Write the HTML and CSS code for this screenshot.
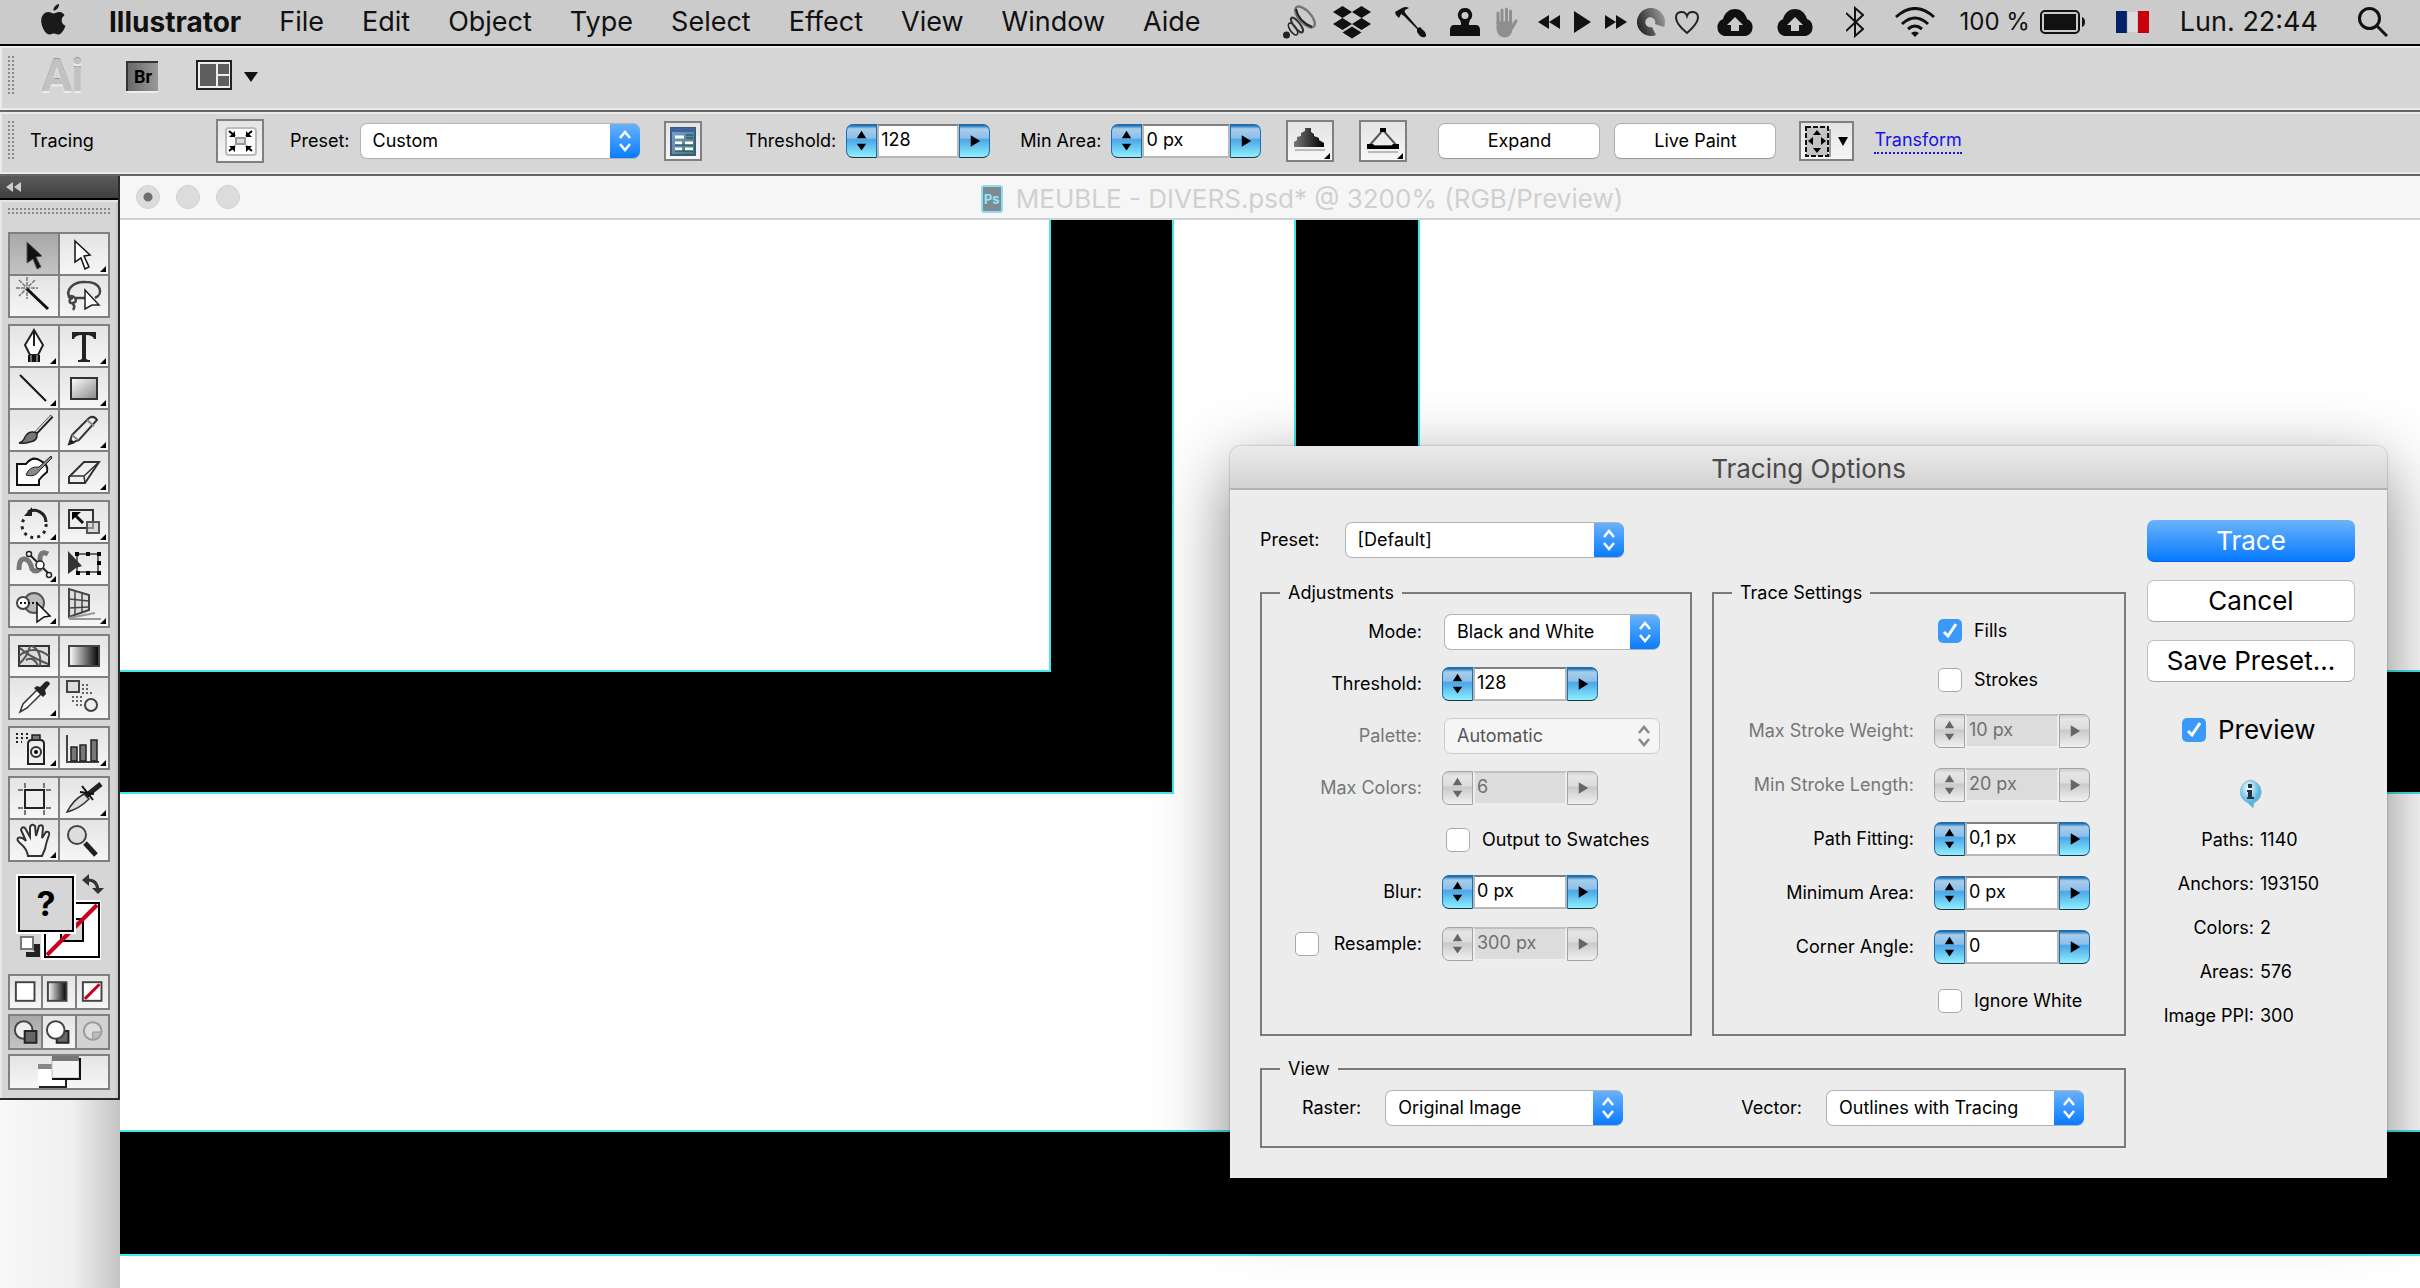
FILE: index.html
```html
<!DOCTYPE html>
<html lang="en">
<head>
<meta charset="utf-8">
<title>Illustrator</title>
<link rel="stylesheet" href="styles.css">
</head>
<body>
<header class="menubar">
  <svg class="apple" viewBox="0 0 28 32"><path fill="#1a1a1a" d="M19 0c.3 3-2.200 6.500-5.500 6.600C13.200 3.500 16 .4 19 0zM24.500 11.200c-4.200 2.700-3.500 8.800 1 10.600-1.400 4.200-4.200 8.700-7 8.800-1.900 0-2.500-1.100-4.700-1.100s-2.900 1.100-4.700 1.100C5.200 30.400 1 22 1.200 16.300 1.400 11.200 4.800 8 8.300 8c2.200 0 4 1.400 5.300 1.400C14.800 9.400 17 7.800 19.700 8c1.900.1 3.700 1.200 4.800 3.200z"/></svg>
  <nav class="menus">
    <button class="app-name">Illustrator</button>
    <button>File</button>
    <button>Edit</button>
    <button>Object</button>
    <button>Type</button>
    <button>Select</button>
    <button>Effect</button>
    <button>View</button>
    <button>Window</button>
    <button>Aide</button>
  </nav>
  <div class="status">
    <svg width="34" height="34" viewBox="0 0 34 34"><circle cx="3.500" cy="30" r="3.500" fill="#222"/><g fill="none"><ellipse cx="10" cy="24" rx="7" ry="3" stroke="#222" stroke-width="1.500" transform="rotate(55 10 24)"/><ellipse cx="14" cy="20" rx="9" ry="3" stroke="#333" stroke-width="2" transform="rotate(52 14 20)"/><ellipse cx="22" cy="12" rx="13" ry="6" stroke="#777" stroke-width="2.500" transform="rotate(48 22 12)"/><path d="M13 4q2 12 16 18" stroke="#222" stroke-width="2"/></g></svg>
    <svg class="s16" width="38" height="33" viewBox="0 0 38 33" fill="#111"><path d="M9.500 0l9.500 6-9.500 6L0 6zM28.500 0L38 6l-9.500 6L19 6zM9.500 12l9.500 6-9.500 6L0 18zM28.500 12L38 18l-9.500 6L19 18zM19 20.500l9.500 6-9.500 6-9.500-6z"/></svg>
    <svg class="s24" width="31" height="31" viewBox="0 0 31 31"><path fill="#111" d="M1 8L0 5l7-4q4-2 7 0l-4 2q-1 2 1 4l12 14 2-1 5 5q2 4 0 5t-5-1l-3-4v-3L9 9 6 7 4 11z"/></svg>
    <svg class="s24" width="30" height="29" viewBox="0 0 30 29"><path fill="#111" fill-rule="evenodd" d="M15 0a7 7 0 0 1 5 12l-1 3v2h8q3 1 3 5v6H0v-6q0-4 3-5h8v-2l-1-3a7 7 0 0 1 5-12zm0 4a3.500 3.500 0 1 0 0 7 3.500 3.500 0 0 0 0-7z"/></svg>
    <svg class="s16" width="22" height="31" viewBox="0 0 22 31" fill="none" stroke="#8e8e8e" stroke-width="3" stroke-linecap="round"><path d="M2 16V6M6 15V3M10.500 15V2M14.500 16V4M20 14l-4 7"/><path fill="#8e8e8e" d="M2 16h13v6q-1 7-6 7-6 0-7-7z"/></svg>
    <svg class="s20" width="22" height="14" viewBox="0 0 22 14"><path fill="#111" d="M11 0v14L0 7zM22 0v14L11 7z"/></svg>
    <svg class="s14" width="17" height="22" viewBox="0 0 17 22"><path fill="#111" d="M0 0l17 11L0 22z"/></svg>
    <svg class="s14" width="22" height="14" viewBox="0 0 22 14"><path fill="#111" d="M0 0v14l11-7zM11 0v14l11-7z"/></svg>
    <svg class="s10" width="28" height="28" viewBox="0 0 28 28"><defs><linearGradient id="swirl" x1="0" x2="1" y1=".7" y2=".3"><stop offset="0" stop-color="#222"/><stop offset="1" stop-color="#999"/></linearGradient></defs><path fill="url(#swirl)" d="M19 27A14 14 0 1 1 27 19l-9-3a5 5 0 1 0-3 3z"/></svg>
    <svg class="s10" width="24" height="25" viewBox="0 0 24 25"><path fill="none" stroke="#222" stroke-width="2" d="M12 23Q1 14 1 7.500C1 1 10 0 12 6 14 0 23 1 23 7.500 23 14 12 23 12 23z"/></svg>
    <svg class="s16" width="40" height="27" viewBox="0 0 40 27"><path fill="#111" d="M9 27a9 9 0 0 1-1-17C10 3 15 0 20 0s10 3 12 10a9 9 0 0 1-1 17z"/><path fill="#ccc" d="M20 8l8 8h-4v6h-8v-6h-4z"/></svg>
    <svg class="s20" width="40" height="27" viewBox="0 0 40 27"><path fill="#111" d="M9 27a9 9 0 0 1-1-17C10 3 15 0 20 0s10 3 12 10a9 9 0 0 1-1 17z"/><path fill="#ccc" d="M20 8l8 8h-4v6h-8v-6h-4z"/></svg>
    <svg class="s30" width="18" height="32" viewBox="0 0 18 32"><path fill="none" stroke="#111" stroke-width="2" d="M0 7l17 16-8 7V2l8 7L0 25"/></svg>
    <svg class="s30" width="40" height="30" viewBox="0 0 40 30" fill="none" stroke="#111" stroke-width="3"><path d="M1 10Q20-7 39 10M7 17q13-12 26 0M13 22q7-6 14 0"/><path fill="#111" stroke="none" d="M16 26q4-3 8 0l-4 4z"/></svg>
    <span class="s24 percent">100 %</span>
    <svg class="s10" width="45" height="24" viewBox="0 0 45 24"><rect x="1" y="1" width="38" height="22" rx="4" fill="none" stroke="#111" stroke-width="2"/><rect x="4" y="4" width="32" height="16" fill="#111"/><path fill="#111" d="M42 7q3 1 3 5t-3 5z"/></svg>
    <svg class="s30" width="33" height="22" viewBox="0 0 33 22"><path fill="#012169" d="M0 0h11v22H0z"/><path fill="#ddd" stroke="#888" stroke-width=".5" d="M11 0h11v22H11z"/><path fill="#c8000a" d="M22 0h11v22H22z"/></svg>
    <span class="s30 clock">Lun. 22:44</span>
    <svg class="s40" width="30" height="30" viewBox="0 0 30 30" fill="none" stroke="#111" stroke-width="3"><circle cx="11.500" cy="11.500" r="10"/><path d="M19 19l10 10"/></svg>
  </div>
</header>

<div class="appbar">
  <span class="grip"></span>
  <span class="ai-logo">Ai</span>
  <button class="br-button">Br</button>
  <button class="layout-button"><svg width="64" height="32" viewBox="0 0 64 32"><rect x="1" y="1" width="34" height="28" fill="#eee" stroke="#222" stroke-width="2"/><path fill="#5e5e5e" d="M4 4h16v22H4zM22 4h11v10H22zM22 16h11v10H22z"/><path fill="#111" d="M48 12h14l-7 10z"/></svg></button>
</div>

<div class="options">
  <span class="grip"></span>
  <span class="tool-name">Tracing</span>
  <button class="icon-btn placed"><svg width="44" height="38" viewBox="0 0 44 38"><rect x="8" y="6" width="30" height="27" rx="3" fill="#fff" stroke="#bbb" stroke-width="2"/><rect x="18" y="16" width="9" height="6" fill="#ddd" stroke="#999" stroke-width="2"/><path stroke="#000" stroke-width="2" d="M11 9l6 5M34 9l-6 5M11 29l6-5M34 29l-6-5"/><path d="M17 9v6h-6zM28 9v6h6zM17 30v-6h-6zM28 30v-6h6z"/></svg></button>
  <label for="bar-preset">Preset:</label>
  <select id="bar-preset" class="w-bar"><option>Custom</option></select>
  <button class="icon-btn dialog-btn"><svg width="34" height="35" viewBox="0 0 34 35"><defs><linearGradient id="dlg" x1="0" y1="0" x2="1" y2="1"><stop offset="0" stop-color="#7fa0d8"/><stop offset="1" stop-color="#3f7a6c"/></linearGradient></defs><rect x="5" y="4" width="24" height="27" fill="url(#dlg)" stroke="#3a5a80" stroke-width="2"/><path stroke="#3f62a0" stroke-width="4" d="M5 6h24"/><path stroke="#fff" stroke-width="3" d="M9 13h9M9 19h7M19 19h8M9 25h7M19 25h8"/><path stroke="#245" stroke-width="1" d="M20 11h7M20 14h7M9 21h18M9 27h18"/></svg></button>
  <label for="bar-threshold">Threshold:</label>
  <span class="spin spin-a"><button class="step" aria-label="Step"><svg viewBox="0 0 30 34"><path d="M15 6l5 8H10zM15 27l5-7H10z"/></svg></button><input id="bar-threshold" value="128"><button class="pop" aria-label="Slider"><svg viewBox="0 0 30 34"><path d="M11 11l10 6-10 6z"/></svg></button></span>
  <label for="bar-area">Min Area:</label>
  <span class="spin spin-b"><button class="step" aria-label="Step"><svg viewBox="0 0 30 34"><path d="M15 6l5 8H10zM15 27l5-7H10z"/></svg></button><input id="bar-area" value="0 px"><button class="pop" aria-label="Slider"><svg viewBox="0 0 30 34"><path d="M11 11l10 6-10 6z"/></svg></button></span>
  <button class="icon-btn view-btn"><svg width="44" height="38" viewBox="0 0 44 38"><defs><linearGradient id="mtn"><stop offset="0" stop-color="#777"/><stop offset="1" stop-color="#000"/></linearGradient></defs><path fill="url(#mtn)" d="M6 25v-5l3-2v-3l4-1v-3l4-2V6h6v4l3 2v2l5 2v2l5 3v4z"/><path stroke="#bbb" stroke-width="2" d="M7 28h30"/><path d="M42 31v6h-6z"/></svg></button>
  <button class="icon-btn view-btn"><svg width="44" height="38" viewBox="0 0 44 38"><path fill="none" stroke="#555" stroke-width="2" d="M8 24L22 8l14 16z"/><path d="M6 22h6l2 2h16l2-2h6v5H6zM19 6h6v4h-6z"/><path stroke="#bbb" stroke-width="2" d="M7 30h30"/><path d="M42 31v6h-6z"/></svg></button>
  <button class="push">Expand</button>
  <button class="push">Live Paint</button>
  <button class="icon-btn warp-btn"><svg width="51" height="35" viewBox="0 0 51 35"><rect x="5" y="3" width="22" height="29" fill="#c4c4c4" stroke="#111" stroke-width="2" stroke-dasharray="5 2"/><path stroke="#999" stroke-width="2" d="M29 5v28"/><path d="M16 6l4 5h-8zM16 29l4-5h-8zM7 17l5-4v8zM25 17l-5-4v8zM37 13h10l-5 9z"/></svg></button>
  <a class="transform" href="#transform">Transform</a>
</div>

<main class="workspace">
  <aside class="toolbox">
    <div class="tb-head"><svg width="18" height="10" viewBox="0 0 18 10"><path fill="#ccc" d="M7 0v10L0 5zM15 0v10L8 5z"/></svg></div>
    <div class="tb-body">
      <div class="hgrip"></div>
      <div class="grp">
        <button class="on"><svg viewBox="0 0 48 40"><path fill="#111" stroke="#555" d="M17 8l15 14-6 1 5 10-4 2-4-10-6 4z"/></svg></button>
        <button><svg viewBox="0 0 48 40"><path fill="#fff" stroke="#111" stroke-width="1.500" d="M15 7l15 14-6 1 5 11-4 2-4-11-6 4z"/><path d="M46 32v6h-6z"/></svg></button>
        <button><svg viewBox="0 0 48 40"><path stroke="#777" stroke-width="1.500" stroke-dasharray="4 1" d="M17 1v22M6 12h22M9 4l16 16M25 4L9 20"/><path stroke="#111" stroke-width="3" d="M17 13l21 20"/></svg></button>
        <button><svg viewBox="0 0 48 40"><path fill="none" stroke="#444" stroke-width="2.500" d="M11 24C3 14 14 5 26 6c15 0 18 12 9 16M10 20c6 0 8 6 3 7s-4-5 0-5M12 27q4 3 1 7M16 22h9"/><path fill="#fff" stroke="#222" stroke-width="1.500" d="M25 14l14 15h-7l-7 4z"/></svg></button>
      </div>
      <div class="grp">
        <button><svg viewBox="0 0 48 40"><path fill="#fff" stroke="#222" stroke-width="2" d="M24 4l9 15-5 10h-8l-5-10z"/><path stroke="#222" stroke-width="2" d="M24 4v16"/><path fill="#111" d="M18 29h12v7H18z"/><path stroke="#ccc" d="M21 29v8M27 29v8"/><path d="M46 32v6h-6z"/></svg></button>
        <button><svg viewBox="0 0 48 40"><path fill="#222" d="M12 6h24v7h-2q-1-4-8-4v23q0 2 4 2v2H18v-2q4 0 4-2V9q-7 0-8 4h-2z"/><path d="M46 32v6h-6z"/></svg></button>
        <button><svg viewBox="0 0 48 40"><path stroke="#111" stroke-width="2" d="M10 7l26 26"/><path d="M46 32v6h-6z"/></svg></button>
        <button><svg viewBox="0 0 48 40"><defs><linearGradient id="sq" x1="0" y1="0" x2="1" y2="1"><stop offset="0" stop-color="#fff"/><stop offset="1" stop-color="#888"/></linearGradient></defs><rect x="11" y="10" width="26" height="21" fill="url(#sq)" stroke="#333" stroke-width="2"/><path d="M46 32v6h-6z"/></svg></button>
        <button><svg viewBox="0 0 48 40"><path stroke="#222" stroke-width="4" d="M42 6L26 23"/><path stroke="#ddd" stroke-width="1.500" d="M41 6L26 22"/><path fill="#777" stroke="#222" stroke-width="1.500" d="M9 33q4-1 6-6 4-7 12-4 1 8-7 9-6 2-11 1z"/></svg></button>
        <button><svg viewBox="0 0 48 40"><path fill="#eee" stroke="#333" stroke-width="2" d="M9 34l3-9L29 8q5-3 8 2L19 30z"/><path fill="#222" d="M9 35l2-6 4 4z"/><path stroke="#888" stroke-width="2" d="M27 10l7 6M12 25l6 5"/><path d="M46 32v6h-6z"/></svg></button>
        <button><svg viewBox="0 0 48 40"><path fill="#fff" stroke="#111" stroke-width="2" d="M7 12h9q7-9 15-3 8 4 6 11-5 4-8 8v5H7z"/><path fill="#888" stroke="#222" d="M16 23q3-9 13-8l12-11 1 2-12 12q-5 8-14 5z"/></svg></button>
        <button><svg viewBox="0 0 48 40"><path fill="#eee" stroke="#333" stroke-width="2" d="M9 25l15-15h15L25 31H9z"/><path fill="none" stroke="#333" stroke-width="1.500" d="M9 24h15l15-14M24 24l1 7"/><path d="M46 32v6h-6z"/></svg></button>
      </div>
      <div class="grp">
        <button><svg viewBox="0 0 48 40"><path fill="none" stroke="#222" stroke-width="3" d="M18 10a12 12 0 0 1 18 10"/><path fill="none" stroke="#222" stroke-width="3" stroke-dasharray="3 4" d="M36 22a12 12 0 1 1-22-5"/><path fill="#222" d="M14 14l8-9v9z"/><path d="M46 32v6h-6z"/></svg></button>
        <button><svg viewBox="0 0 48 40"><rect x="9" y="8" width="24" height="18" fill="#eee" stroke="#333" stroke-width="2"/><rect x="27" y="20" width="12" height="11" fill="#ccc" fill-opacity=".6" stroke="#555" stroke-width="2"/><path stroke="#111" stroke-width="3" d="M14 12l9 9"/><path d="M12 10h9l-9 8zM46 32v6h-6z"/></svg></button>
        <button><svg viewBox="0 0 48 40"><path fill="none" stroke="#777" stroke-width="5" d="M9 26q0-12 6-11 5 1 7 10 3 4 8 0V14q1-8 8-4"/><path stroke="#222" stroke-width="2" d="M19 10l21 21"/><g fill="#fff" stroke="#222" stroke-width="1.500"><circle cx="19" cy="10" r="2.500"/><circle cx="30" cy="21" r="4"/><circle cx="39" cy="31" r="2.500"/></g><path d="M46 32v6h-6z"/></svg></button>
        <button><svg viewBox="0 0 48 40"><path fill="none" stroke="#666" stroke-width="2" d="M17 10h21v18H17z"/><path d="M15 8h4v4h-4zM26 8h4v4h-4zM37 8h4v4h-4zM37 17h4v4h-4zM37 27h4v4h-4zM26 27h4v4h-4zM16 27h4v4h-4z"/><path fill="#333" d="M8 7l14 15-6 2-8 6z"/></svg></button>
        <button><svg viewBox="0 0 48 40"><circle cx="24" cy="17" r="10" fill="#bbb" stroke="#555" stroke-width="2"/><circle cx="13" cy="17" r="6" fill="#fff" stroke="#444" stroke-width="2"/><path stroke="#111" stroke-width="2" stroke-dasharray="2 2" d="M10 17h18"/><path fill="#fff" stroke="#111" stroke-width="1.500" d="M27 17l13 13-6 1-7 5z"/><path d="M46 32v6h-6z"/></svg></button>
        <button><svg viewBox="0 0 48 40"><path fill="#ddd" stroke="#444" stroke-width="2" d="M9 3v28l20-7V9z"/><path fill="none" stroke="#444" stroke-width="1.500" d="M15 5v24M22 7v19M9 13l20 2M9 22l20-1"/><path stroke="#999" stroke-width="2" d="M9 32l26-5M9 33h32"/><path d="M46 32v6h-6z"/></svg></button>
      </div>
      <div class="grp">
        <button><svg viewBox="0 0 48 40"><rect x="9" y="10" width="30" height="20" fill="#ddd" stroke="#333" stroke-width="2"/><path fill="none" stroke="#555" stroke-width="2" d="M9 20q14-12 30 0M20 10q-2 10-11 18M22 10q10 5 8 20M10 12q8 8 28 16M28 30q-4-10-12-6"/></svg></button>
        <button><svg viewBox="0 0 48 40"><defs><linearGradient id="bw"><stop offset="0" stop-color="#fff"/><stop offset="1" stop-color="#000"/></linearGradient></defs><rect x="9" y="10" width="30" height="20" fill="url(#bw)" stroke="#444" stroke-width="2"/></svg></button>
        <button><svg viewBox="0 0 48 40"><path fill="#fff" stroke="#333" stroke-width="1.500" d="M10 34l3-8 14-14 4 4-14 14z"/><path fill="#222" d="M24 10l3-2 3 1 5-5q4-2 5 2l-5 6 1 4-3 3z"/><path d="M46 32v6h-6z"/></svg></button>
        <button><svg viewBox="0 0 48 40"><rect x="7" y="3" width="12" height="11" fill="#ddd" stroke="#444" stroke-width="2"/><circle cx="31" cy="27" r="6" fill="#eee" stroke="#444" stroke-width="2"/><path stroke="#666" stroke-width="2" stroke-dasharray="2 2" d="M22 7h6M22 11h8M22 15h10M12 19h10M12 23h10M16 27h6"/></svg></button>
      </div>
      <div class="grp">
        <button><svg viewBox="0 0 48 40"><path fill="#eee" stroke="#222" stroke-width="2" d="M18 36V16q0-4 4-4h8q4 0 4 4v20z"/><path fill="#777" stroke="#222" stroke-width="1.500" d="M22 12V7h8v5z"/><circle cx="26" cy="24" r="5" fill="none" stroke="#333" stroke-width="2"/><circle cx="26" cy="24" r="2"/><path stroke="#222" stroke-width="2" stroke-dasharray="2 3" d="M6 6h14M6 10h14M6 14h6"/><path d="M46 32v6h-6z"/></svg></button>
        <button><svg viewBox="0 0 48 40"><path fill="none" stroke="#444" stroke-width="2" d="M7 7v27h32"/><g fill="#777" stroke="#222" stroke-width="1.500"><path d="M11 19h6v14h-6zM20 17h6v16h-6zM31 12h6v21h-6z"/></g><path d="M46 32v6h-6z"/></svg></button>
      </div>
      <div class="grp">
        <button><svg viewBox="0 0 48 40"><path fill="#eee" stroke="#222" stroke-width="2" d="M15 12h19v18H15z"/><path stroke="#777" stroke-width="2" d="M15 5v5M34 5v5M15 32v5M34 32v5M8 12h5M36 12h5M8 30h5M36 30h5"/></svg></button>
        <button><svg viewBox="0 0 48 40"><path fill="#ddd" stroke="#333" stroke-width="1.500" d="M7 34q6-12 17-18l5 5Q19 31 7 34z"/><path stroke="#222" stroke-width="5" d="M26 18L41 6"/><path stroke="#111" stroke-width="2" d="M22 8l11 14M20 14l14 2"/><path d="M46 32v6h-6z"/></svg></button>
        <button><svg viewBox="0 0 48 40"><path fill="#f4f4f4" stroke="#333" stroke-width="2" d="M18 36q-1-7-7-12-5-4-3-6 3-2 8 3l-5-11q1-4 4-2l5 9V7q2-4 5-1l1 10 3-10q4-2 4 2l-1 10 4-6q4-1 3 3-3 8-4 14l-3 7z"/><path d="M46 32v6h-6z"/></svg></button>
        <button><svg viewBox="0 0 48 40"><path stroke="#222" stroke-width="5" d="M25 23l11 12"/><circle cx="17" cy="15" r="9" fill="#ddd" stroke="#444" stroke-width="2"/></svg></button>
      </div>
      <svg class="swatches" viewBox="0 0 102 100"><g stroke="#fff" stroke-width="2"><path fill="#fff" stroke="#fff" d="M34 29h58v58H34z"/><path fill="#fff" stroke="#000" d="M37 31h54v54H37z"/><path fill="#d6d6d6" stroke="#000" d="M53 47h22v22H53z"/></g><path stroke="#c8001e" stroke-width="4" d="M39 83l50-50"/><path fill="#fff" d="M8 2h60v60H8z"/><rect x="11" y="5" width="54" height="54" fill="#d6d6d6" stroke="#000" stroke-width="2"/><path fill="none" stroke="#333" stroke-width="3" d="M80 8q9 0 10 10"/><path fill="#333" d="M74 8l7-6v12zM84 16h12l-6 6z"/><path fill="#222" d="M20 72h12v13H18V80h9z"/><rect x="13" y="65" width="12" height="12" fill="#fff" stroke="#777" stroke-width="2"/><text x="38" y="44" class="qmark">?</text></svg>
      <div class="grp three">
        <button><svg viewBox="0 0 32 32"><rect x="6" y="6" width="19" height="19" fill="#fff" stroke="#444" stroke-width="2"/></svg></button>
        <button><svg viewBox="0 0 32 32"><rect x="5" y="6" width="19" height="19" fill="url(#bw)" stroke="#444" stroke-width="2"/></svg></button>
        <button><svg viewBox="0 0 32 32"><rect x="6" y="6" width="19" height="19" fill="#fff" stroke="#444" stroke-width="2"/><path stroke="#c8001e" stroke-width="3" d="M8 23L23 8"/></svg></button>
      </div>
      <div class="grp three">
        <button class="on"><svg viewBox="0 0 32 32"><circle cx="14" cy="14" r="9" fill="#eee" stroke="#444" stroke-width="2"/><rect x="15" y="15" width="12" height="12" fill="#666" stroke="#222" stroke-width="2"/></svg></button>
        <button><svg viewBox="0 0 32 32"><rect x="14" y="15" width="12" height="12" fill="#666" stroke="#222" stroke-width="2"/><circle cx="13" cy="14" r="9" fill="#fff" stroke="#444" stroke-width="2"/></svg></button>
        <button class="dim"><svg viewBox="0 0 32 32"><circle cx="16" cy="15" r="9" fill="#ddd" stroke="#999" stroke-width="2"/><path fill="#bbb" stroke="#999" d="M16 16h9q-1 6-9 8z"/></svg></button>
      </div>
      <div class="grp one">
        <button><svg viewBox="0 0 98 32"><path fill="#fff" d="M28 12h28v18H28z"/><path fill="#888" d="M28 8h20v5H28z"/><path fill="none" stroke="#222" stroke-width="2" d="M29 31h27v-8"/><path fill="#f4f4f4" stroke="#bbb" stroke-width="1" d="M42 1h27v21H42z"/><path fill="none" stroke="#111" stroke-width="2" d="M42 23h28V2"/><path fill="#777" d="M42 0h27v5H42z"/></svg></button>
      </div>
    </div>
  </aside>

  <section class="document">
    <div class="doc-title">
      <div class="lights"><button class="edited" aria-label="Close"></button><button aria-label="Minimize"></button><button aria-label="Zoom"></button></div>
      <h1><span class="ps">Ps</span>MEUBLE - DIVERS.psd* @ 3200% (RGB/Preview)</h1>
    </div>
    <div class="canvas">
      <svg class="art" width="4000" height="2000"><g stroke="#40e8ec" stroke-width="2"><path d="M-5 451H930V-5H1053V573H-5z"/><path d="M1175-5V573H4005V451H1299V-5z"/><path d="M-5 911H4005V1035H-5z"/></g></svg>
    </div>
  </section>

</main>

<form class="dialog" onsubmit="return false">
  <h2>Tracing Options</h2>
  <div class="dlg-body">
    <div class="dlg-main">
      <div class="preset-row"><label for="preset">Preset:</label><select id="preset" class="w-preset"><option>[Default]</option></select></div>
      <div class="panels">
        <fieldset class="adjust">
          <legend>Adjustments</legend>
          <div class="row"><label for="mode">Mode:</label><select id="mode" class="w-mode"><option>Black and White</option></select></div>
          <div class="row"><label for="threshold">Threshold:</label><span class="spin"><button class="step" aria-label="Step"><svg viewBox="0 0 30 34"><path d="M15 6l5 8H10zM15 27l5-7H10z"/></svg></button><input id="threshold" value="128"><button class="pop" aria-label="Slider"><svg viewBox="0 0 30 34"><path d="M11 11l10 6-10 6z"/></svg></button></span></div>
          <div class="row off"><label for="palette">Palette:</label><select id="palette" class="w-mode" disabled><option>Automatic</option></select></div>
          <div class="row off"><label for="maxcolors">Max Colors:</label><span class="spin"><button class="step" disabled aria-label="Step"><svg viewBox="0 0 30 34"><path d="M15 6l5 8H10zM15 27l5-7H10z"/></svg></button><input id="maxcolors" value="6" disabled><button class="pop" disabled aria-label="Slider"><svg viewBox="0 0 30 34"><path d="M11 11l10 6-10 6z"/></svg></button></span></div>
          <div class="row"><span></span><label class="check"><input type="checkbox">Output to Swatches</label></div>
          <div class="row"><label for="blur">Blur:</label><span class="spin"><button class="step" aria-label="Step"><svg viewBox="0 0 30 34"><path d="M15 6l5 8H10zM15 27l5-7H10z"/></svg></button><input id="blur" value="0 px"><button class="pop" aria-label="Slider"><svg viewBox="0 0 30 34"><path d="M11 11l10 6-10 6z"/></svg></button></span></div>
          <div class="row"><label class="check resample"><input type="checkbox">Resample:</label><span class="spin"><button class="step" disabled aria-label="Step"><svg viewBox="0 0 30 34"><path d="M15 6l5 8H10zM15 27l5-7H10z"/></svg></button><input aria-label="Resample" value="300 px" disabled><button class="pop" disabled aria-label="Slider"><svg viewBox="0 0 30 34"><path d="M11 11l10 6-10 6z"/></svg></button></span></div>
        </fieldset>
        <fieldset class="settings">
          <legend>Trace Settings</legend>
          <div class="row short"><span></span><label class="check"><input type="checkbox" checked>Fills</label></div>
          <div class="row short"><span></span><label class="check"><input type="checkbox">Strokes</label></div>
          <div class="row off"><label for="weight">Max Stroke Weight:</label><span class="spin"><button class="step" disabled aria-label="Step"><svg viewBox="0 0 30 34"><path d="M15 6l5 8H10zM15 27l5-7H10z"/></svg></button><input id="weight" value="10 px" disabled><button class="pop" disabled aria-label="Slider"><svg viewBox="0 0 30 34"><path d="M11 11l10 6-10 6z"/></svg></button></span></div>
          <div class="row off"><label for="length">Min Stroke Length:</label><span class="spin"><button class="step" disabled aria-label="Step"><svg viewBox="0 0 30 34"><path d="M15 6l5 8H10zM15 27l5-7H10z"/></svg></button><input id="length" value="20 px" disabled><button class="pop" disabled aria-label="Slider"><svg viewBox="0 0 30 34"><path d="M11 11l10 6-10 6z"/></svg></button></span></div>
          <div class="row"><label for="fitting">Path Fitting:</label><span class="spin"><button class="step" aria-label="Step"><svg viewBox="0 0 30 34"><path d="M15 6l5 8H10zM15 27l5-7H10z"/></svg></button><input id="fitting" value="0,1 px"><button class="pop" aria-label="Slider"><svg viewBox="0 0 30 34"><path d="M11 11l10 6-10 6z"/></svg></button></span></div>
          <div class="row"><label for="minarea">Minimum Area:</label><span class="spin"><button class="step" aria-label="Step"><svg viewBox="0 0 30 34"><path d="M15 6l5 8H10zM15 27l5-7H10z"/></svg></button><input id="minarea" value="0 px"><button class="pop" aria-label="Slider"><svg viewBox="0 0 30 34"><path d="M11 11l10 6-10 6z"/></svg></button></span></div>
          <div class="row"><label for="corner">Corner Angle:</label><span class="spin"><button class="step" aria-label="Step"><svg viewBox="0 0 30 34"><path d="M15 6l5 8H10zM15 27l5-7H10z"/></svg></button><input id="corner" value="0"><button class="pop" aria-label="Slider"><svg viewBox="0 0 30 34"><path d="M11 11l10 6-10 6z"/></svg></button></span></div>
          <div class="row"><span></span><label class="check"><input type="checkbox">Ignore White</label></div>
        </fieldset>
      </div>
      <fieldset class="view">
        <legend>View</legend>
        <div class="view-row">
          <label for="raster">Raster:</label><select id="raster" class="w-raster"><option>Original Image</option></select>
          <label for="vector" class="push-right">Vector:</label><select id="vector" class="w-vector"><option>Outlines with Tracing</option></select>
        </div>
      </fieldset>
    </div>
    <div class="dlg-side">
      <button class="big primary">Trace</button>
      <button class="big">Cancel</button>
      <button class="big">Save Preset...</button>
      <label class="check preview"><input type="checkbox" checked>Preview</label>
      <svg class="info" width="30" height="30" viewBox="0 0 30 30"><defs><radialGradient id="ball" cx=".4" cy=".3"><stop offset="0" stop-color="#fff"/><stop offset="1" stop-color="#58b4dc"/></radialGradient></defs><path fill="url(#ball)" stroke="#8fc4dc" d="M14 1a12 12 0 0 1 4 23l-1 5-5-5A12 12 0 0 1 14 1z"/><path fill="#234" d="M12 5h4v4h-4zM11 11h5v7h2v2h-7v-2h1v-5h-1z"/></svg>
      <dl class="stats">
        <dt>Paths:</dt><dd>1140</dd>
        <dt>Anchors:</dt><dd>193150</dd>
        <dt>Colors:</dt><dd>2</dd>
        <dt>Areas:</dt><dd>576</dd>
        <dt>Image PPI:</dt><dd>300</dd>
      </dl>
    </div>
  </div>
</form>
</body>
</html>
```
FILE: styles.css
```css
* { box-sizing: border-box; }
html, body { height: 100%; }
body {
  margin: 0;
  display: flex;
  flex-direction: column;
  overflow: hidden;
  position: relative;
  font: 18px/24px Inter, "Liberation Sans", sans-serif;
  color: #000;
  background: #f6f6f6;
}
button, input, select { font: inherit; color: inherit; margin: 0; }
button { border: 0; padding: 0; background: none; }
svg { display: block; flex: none; }

/* System menu bar */
.menubar {
  flex: none;
  display: flex;
  align-items: center;
  height: 46px;
  padding: 0 32px 0 40px;
  border-bottom: 2px solid #000;
  background: #cbcbcb;
  color: #111;
  font-size: 27px;
  line-height: 44px;
  white-space: nowrap;
}
.apple { width: 28px; height: 32px; margin-bottom: 4px; }
.menus { display: flex; gap: 38px; margin-left: 41px; }
.app-name { font-size: 28px; font-weight: 700; }
.status { display: flex; align-items: center; margin-left: auto; }
.percent { font-size: 24px; }
.s10 { margin-left: 10px; }
.s14 { margin-left: 14px; }
.s16 { margin-left: 16px; }
.s20 { margin-left: 20px; }
.s24 { margin-left: 24px; }
.s30 { margin-left: 31px; }
.s40 { margin-left: 40px; }

/* Application bar and options bar */
.appbar, .options {
  flex: none;
  display: flex;
  align-items: center;
  padding: 0 0 4px 8px;
  background: #d6d6d6;
  border-bottom: 2px solid #666;
  box-shadow: inset 0 2px #ebebeb, inset 0 -2px #ebebeb, inset 2px 0 #ebebeb;
}
.appbar { height: 66px; }
.options { height: 64px; white-space: nowrap; }
.grip {
  width: 6px;
  height: 40px;
  background: radial-gradient(circle at 1px 1px, #8a8a8a 1px, transparent 1px) 0 0 / 4px 4px;
}
.ai-logo {
  margin-left: 28px;
  width: 84px;
  font: 700 44px/48px Roboto, sans-serif;
  color: #c2c2c2;
  text-shadow: 0 2px #eee, 0 -1px #999;
}
.br-button {
  width: 32px;
  height: 30px;
  margin-right: 38px;
  background: linear-gradient(90deg, #6a6a6a, #999);
  border: solid #333;
  border-width: 2px 0 0 2px;
  box-shadow: 0 2px #eee;
  font: 700 18px/26px Roboto, sans-serif;
}
.tool-name { width: 186px; margin-left: 16px; }
.icon-btn {
  display: flex;
  align-items: center;
  justify-content: center;
  border: 2px solid #808080;
  background: linear-gradient(#e4e4e4, #f6f6f6);
}
.placed { width: 48px; height: 44px; margin-right: 26px; }
.dialog-btn { width: 38px; height: 40px; margin: 0 44px 0 24px; }
.view-btn { width: 48px; height: 42px; margin-left: 25px; }
.warp-btn { width: 55px; height: 40px; margin: 0 20px 0 23px; }
.push {
  width: 162px;
  height: 36px;
  margin-left: 14px;
  border: 1px solid #b0b0b0;
  border-bottom-color: #999;
  border-radius: 7px;
  background: #fff;
}
.view-btn + .push { margin-left: 31px; }
.transform {
  color: #1414e6;
  text-decoration: none;
  border-bottom: 2px dotted #1414e6;
}
.options > label { margin-right: 10px; }

/* Pop-up menus */
select {
  appearance: none;
  height: 36px;
  padding: 0 34px 0 12px;
  border: 1px solid #b4b4b4;
  border-right: 0;
  border-radius: 7px;
  background: #fff url("data:image/svg+xml,%3Csvg xmlns='http://www.w3.org/2000/svg' viewBox='0 0 30 36' preserveAspectRatio='none'%3E%3Cdefs%3E%3ClinearGradient id='g' x2='0' y2='1'%3E%3Cstop offset='0' stop-color='%236cb3fa'/%3E%3Cstop offset='1' stop-color='%23067aff'/%3E%3C/linearGradient%3E%3C/defs%3E%3Cpath fill='url(%23g)' d='M0 0h30v36H0z'/%3E%3Cpath fill='none' stroke='%23fff' stroke-width='2.500' d='M10 15l5-6 5 6M10 21l5 6 5-6'/%3E%3C/svg%3E") right center / 30px 36px no-repeat;
  background-origin: border-box;
}
select:disabled {
  opacity: 1;
  color: #555;
  border: 1px solid #ccc;
  background: #f5f5f5 url("data:image/svg+xml,%3Csvg xmlns='http://www.w3.org/2000/svg' viewBox='0 0 30 36'%3E%3Cpath fill='none' stroke='%23888' stroke-width='2.500' d='M10 15l5-6 5 6M10 21l5 6 5-6'/%3E%3C/svg%3E") right center / 30px 36px no-repeat;
}
.w-bar { width: 280px; }
.w-preset { width: 279px; }
.w-mode { width: 216px; margin-left: 2px; }
.w-raster { width: 238px; }
.w-vector { width: 258px; }

/* Number field with stepper and slider buttons */
.spin { display: flex; width: 156px; height: 34px; }
.spin-a { width: 144px; margin-right: 30px; }
.spin-b { width: 150px; }
.spin input {
  flex: 1;
  min-width: 0;
  padding: 0 2px 3px;
  border: 2px solid #b8b8b8;
  border-top-color: #808080;
  border-radius: 0;
  background: #fff;
}
.step, .pop {
  width: 31px;
  border: 1px solid #1b6fae;
  border-bottom-color: #234;
  background: linear-gradient(#0b62ac, #a9cdea 12%, #8cc0ea 40%, #4ba6e6 46%, #8ff0ff 100%);
}
.step svg, .pop svg { width: 100%; height: 100%; }
.step { border-radius: 7px 0 0 7px; }
.pop { border-radius: 0 7px 7px 0; }
.step:disabled, .pop:disabled {
  border-color: #a4a4a4;
  background: linear-gradient(#ccc, #e6e6e6 12%, #ddd 42%, #cacaca 48%, #f0f0f0 100%);
}
.step:disabled path, .pop:disabled path { fill: #666; }
.spin input:disabled { background: #dcdcdc; color: #707070; border-color: #c0c0c0 #eee #eee; }

/* Tick boxes */
.check { display: flex; align-items: center; gap: 12px; }
input[type="checkbox"] {
  appearance: none;
  flex: none;
  width: 24px;
  height: 24px;
  border: 1px solid #a8a8a8;
  border-radius: 5px;
  background: #fff;
}
input[type="checkbox"]:checked {
  border: 0;
  background: #3b99fc url("data:image/svg+xml,%3Csvg xmlns='http://www.w3.org/2000/svg' viewBox='0 0 24 24'%3E%3Cpath fill='none' stroke='%23fff' stroke-width='3' d='M6 13l4 4 8-12'/%3E%3C/svg%3E");
}

/* Workspace */
.workspace { flex: 1; display: flex; align-items: flex-start; min-height: 0; background: linear-gradient(90deg, #f8f8f8, #f0f0f0 72px, #c4c4c4 120px); }
.toolbox {
  flex: none;
  width: 120px;
  border-right: 2px solid #2b2b2e;
  border-bottom: 2px solid #2b2b2e;
  background: #d6d6d6;
}
.tb-head {
  height: 24px;
  padding: 6px;
  background: linear-gradient(#5a5a5a, #404040);
  border-bottom: 2px solid #000;
}
.tb-body { padding: 8px 8px 8px; box-shadow: inset 2px 2px #e6e6e6, inset -2px 0 #c8c8c8; }
.hgrip { height: 6px; margin-bottom: 18px; background: radial-gradient(circle at 1px 1px, #8a8a8a 1px, transparent 1px) 0 0 / 4px 4px; }
.grp {
  display: grid;
  grid-template-columns: 1fr 1fr;
  grid-auto-rows: 40px;
  gap: 2px;
  margin-bottom: 6px;
  padding: 2px;
  background: #808080;
}
.grp button { background: linear-gradient(#e4e4e4, #f6f6f6); }
.grp .on { background: linear-gradient(#a8a8a8, #c4c4c4); }
.grp .dim { background: #d2d2d2; }
.grp svg { width: 100%; height: 100%; }
.three { grid-template-columns: repeat(3, 1fr); grid-auto-rows: 32px; margin-bottom: 4px; }
.one { grid-template-columns: 1fr; grid-auto-rows: 32px; margin-bottom: 0; }
.swatches { width: 102px; height: 100px; margin: 10px 0 2px; }
.qmark { font: 700 34px Inter, sans-serif; text-anchor: middle; }

.document { flex: 1; align-self: stretch; min-width: 0; display: flex; flex-direction: column; background: #fff; }
.doc-title {
  flex: none;
  display: flex;
  align-items: center;
  height: 44px;
  padding: 0 56px 0 16px;
  border-bottom: 2px solid #d0d0d0;
  background: #f6f6f6;
}
.lights { display: flex; gap: 16px; }
.lights button { width: 24px; height: 24px; border-radius: 50%; border: 1px solid #d2d2d2; background: #dcdcdc; }
.lights .edited { background: radial-gradient(circle, #6e6e6e 4px, #dcdcdc 5px); }
.doc-title h1 { flex: 1; display: flex; justify-content: center; align-items: center; gap: 13px; margin: 0; padding-top: 3px; font-size: 26px; line-height: 36px; font-weight: 400; color: #d0d0d0; white-space: nowrap; }
.ps { width: 22px; height: 28px; border: 2px solid #8fdcf0; border-radius: 3px; background: #7d8a90; color: #8fe6fa; font: 700 13px/24px Inter, sans-serif; text-align: center; }
.canvas { flex: 1; position: relative; overflow: hidden; }
.art { position: absolute; left: 0; top: 0; }

/* Tracing Options window, floating over the document */
.dialog {
  position: absolute;
  right: 33px;
  top: 446px;
  width: 1157px;
  border-radius: 10px 10px 0 0;
  background: #ececec;
  box-shadow: 0 0 2px rgba(0,0,0,.4), 0 24px 70px rgba(0,0,0,.5);
}
.dialog h2 {
  margin: 0;
  height: 44px;
  border-bottom: 2px solid #b2b2b2;
  border-radius: 10px 10px 0 0;
  background: linear-gradient(#ebebeb, #d2d2d2);
  font-size: 26px;
  line-height: 45px;
  font-weight: 400;
  text-align: center;
  color: #4a4a4a;
}
.dlg-body { display: flex; gap: 21px; padding: 30px 32px 30px 30px; }
.dlg-main { flex: 1; display: flex; flex-direction: column; gap: 20px; }
.preset-row { display: flex; align-items: center; gap: 25px; height: 40px; }
.panels { display: flex; gap: 20px; }
fieldset { margin: 0; min-width: 0; padding: 0; border: 2px solid #7a7a7a; }
legend { margin-left: 18px; padding: 0 8px; line-height: 26px; }
.adjust { flex: 432; padding-bottom: 64px; }
.settings { flex: 414; padding-bottom: 6px; }
.row { display: grid; grid-template-columns: 160px 1fr; column-gap: 20px; align-items: center; height: 52px; }
.settings .row { grid-template-columns: 200px 1fr; height: 54px; }
.settings .short { height: 49px; }
.row > label:first-child { text-align: right; white-space: nowrap; }
.row > .check:last-child { margin-left: 4px; white-space: nowrap; }
.resample { justify-content: flex-end; gap: 15px; }
.off label { color: #777; }
.view { padding-bottom: 20px; }
.view-row { display: flex; align-items: center; gap: 24px; padding: 8px 40px 0; }
.push-right { margin-left: auto; }
.dlg-side { width: 208px; display: flex; flex-direction: column; gap: 18px; font-size: 26px; }
.big { height: 42px; border: 1px solid #c0c0c0; border-bottom-color: #a8a8a8; border-radius: 7px; background: #fff; }
.primary { border: 0; border-bottom: 1px solid #0560f0; background: linear-gradient(#6cb3fa, #067aff); color: #fff; }
.preview { margin: 18px 0 0 35px; height: 24px; }
.info { align-self: center; margin-top: 19px; }
.stats { display: grid; grid-template-columns: 107px 1fr; column-gap: 6px; grid-auto-rows: 44px; margin: -9px 0 0; font-size: 18px; line-height: 44px; white-space: nowrap; }
.stats dt { text-align: right; }
.stats dd { margin: 0; }
```
